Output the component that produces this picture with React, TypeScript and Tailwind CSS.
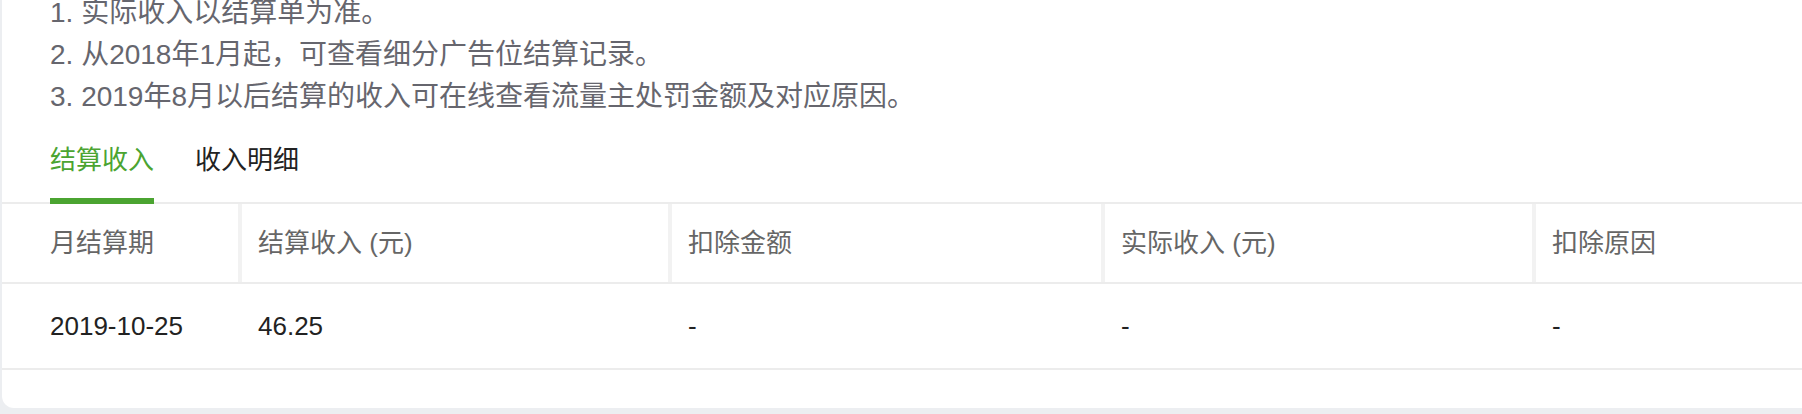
import React from 'react';

const notes = [
  '1. 实际收入以结算单为准。',
  '2. 从2018年1月起，可查看细分广告位结算记录。',
  '3. 2019年8月以后结算的收入可在线查看流量主处罚金额及对应原因。',
];

const columns = ['月结算期', '结算收入 (元)', '扣除金额', '实际收入 (元)', '扣除原因'];

const rows = [['2019-10-25', '46.25', '-', '-', '-']];

export default function App() {
  return (
    <div className="h-[414px] overflow-hidden bg-[#eceef1] font-['Liberation_Sans','Noto_Sans_CJK_SC',sans-serif]">
      <div className="ml-[2px] h-[408px] overflow-hidden rounded-bl-[12px] bg-white">
        {/* notes */}
        <div className="-mt-[8px] pl-[48px] text-[28px] leading-[42px] text-[#66666e]">
          {notes.map((n) => (
            <p key={n}>{n}</p>
          ))}
        </div>

        {/* tabs */}
        <div className="flex gap-[41px] border-b-2 border-[#ececec] pl-[48px] text-[26px] leading-[40px]">
          <div className="-mb-[2px] flex flex-col">
            <span className="pt-[22px] pb-[18px] text-[#4ba431]">结算收入</span>
            <span className="h-[6px] bg-[#4ba431]" />
          </div>
          <div className="-mb-[2px] flex flex-col">
            <span className="pt-[22px] pb-[18px] text-[#222]">收入明细</span>
            <span className="h-[6px]" />
          </div>
        </div>

        {/* table */}
        <div className="text-[26px] leading-[40px]">
          <div className="grid h-[80px] grid-cols-[240px_430px_433px_431px_1fr] border-b-2 border-[#ececec] text-[#666]">
            {columns.map((c, i) => (
              <div
                key={c}
                className={`flex items-center ${i === 0 ? 'pl-[48px]' : 'pl-[16px]'} ${
                  i < columns.length - 1 ? 'border-r-4 border-[#f2f2f2]' : ''
                }`}
              >
                {c}
              </div>
            ))}
          </div>
          {rows.map((r) => (
            <div
              key={r[0]}
              className="grid h-[86px] grid-cols-[240px_430px_433px_431px_1fr] border-b-2 border-[#ececec] text-[#222]"
            >
              {r.map((v, i) => (
                <div key={i} className={`flex items-center ${i === 0 ? 'pl-[48px]' : 'pl-[16px]'}`}>
                  {v}
                </div>
              ))}
            </div>
          ))}
        </div>
      </div>
    </div>
  );
}
